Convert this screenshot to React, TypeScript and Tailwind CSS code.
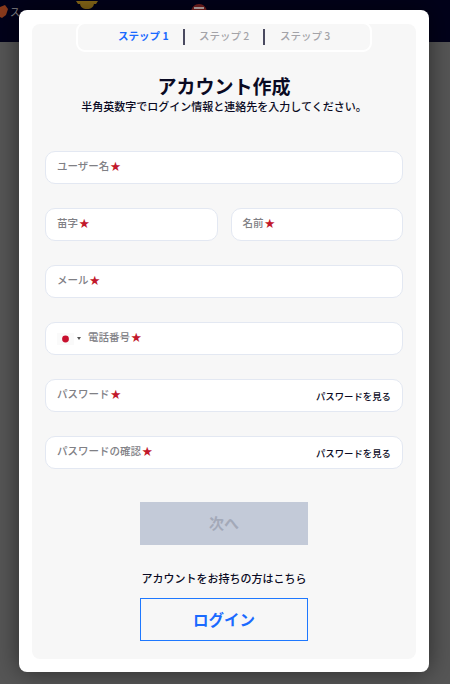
import React from "react";

const FONT = "[font-family:'Noto_Sans_CJK_JP','Noto_Sans',sans-serif]";

function Star() {
  return <span className="ml-[1px] -translate-y-[1px] text-[10.5px] font-bold leading-none text-[#c2182b]">★</span>;
}

function Field({ label, className = "", right }: { label: string; className?: string; right?: boolean }) {
  return (
    <div className={`flex h-[33px] items-center rounded-[10px] border border-[#e3e8f2] bg-white pl-[11px] pr-[11px] ${className}`}>
      <span className="-translate-y-[1px] text-[10.5px] font-medium leading-none text-[#808085]">{label}</span>
      <Star />
      {right && <span className="ml-auto pt-[1px] text-[9.4px] font-medium text-[#0a0a23]">パスワードを見る</span>}
    </div>
  );
}

function Step({ label, active, className }: { label: string; active?: boolean; className: string }) {
  return (
    <span className={`w-[50px] shrink-0 -translate-y-[1px] whitespace-nowrap text-center ${active ? "text-[#1a6aff]" : "font-medium text-[#a3a3a8]"} ${className}`}>
      {label}
    </span>
  );
}

export default function App() {
  return (
    <div className={`relative h-[684px] w-[450px] overflow-hidden bg-[#565656] ${FONT}`}>
      <div className="flex h-[42px] items-start bg-[#02021a]">
        <svg width="8" height="13" viewBox="0 0 8 13" className="mt-[5px] shrink-0">
          <path d="M0 2l5-2 3 4-2 6-4 3-2-1z" fill="#8a3a1c" />
        </svg>
        <span className="ml-[2px] mt-[5px] text-[10px] leading-[14px] text-[#8a8a8a]">ス</span>
        <svg width="24" height="10" viewBox="0 0 24 10" className="ml-[55px] shrink-0">
          <path d="M5 1h14v2c0 4-3 6-7 6s-7-2-7-6zM1 1h4v3H3zM19 1h4l-2 3h-2z" fill="#8a6a18" />
        </svg>
        <svg width="16" height="9" viewBox="0 0 16 9" className="ml-[92px] mt-[4px] shrink-0">
          <path d="M8 0c4 0 8 3 8 9H0c0-6 4-9 8-9z" fill="#7a2020" />
          <rect x="3" y="3" width="10" height="2" fill="#c9b8b8" />
        </svg>
      </div>

      <div className="absolute left-[19px] top-[10px] h-[662px] w-[410px] rounded-[8px] bg-white px-[13px] pb-[13px] pt-[14px] shadow-[0_0_24px_rgba(0,0,0,0.5)]">
        <div className="flex h-full flex-col rounded-[8px] bg-[#f7f7f7] px-[13px]">
          <div className="-mt-[2px] mx-auto flex h-[30px] w-[296px] shrink-0 items-center rounded-[9px] border-2 border-white bg-[#f7f7f7] text-[10.5px] font-bold">
            <Step label="ステップ 1" active className="ml-[40px]" />
            <span className="ml-[15px] h-[16px] w-[2px] bg-[#4a4a60]" />
            <Step label="ステップ 2" className="ml-[14px]" />
            <span className="ml-[14px] h-[16px] w-[2px] bg-[#4a4a60]" />
            <Step label="ステップ 3" className="ml-[15px]" />
          </div>

          <h1 className="mt-[22px] text-center text-[19px] font-bold leading-[24px] text-[#0a0a23]">アカウント作成</h1>
          <p className="text-center text-[11px] font-medium leading-[16px] text-[#0a0a23]">半角英数字でログイン情報と連絡先を入力してください。</p>

          <div className="mt-[37px] flex flex-col gap-[24px]">
            <Field label="ユーザー名" />
            <div className="flex gap-[13px]">
              <Field label="苗字" className="flex-1" />
              <Field label="名前" className="flex-1" />
            </div>
            <Field label="メール" />
            <div className="flex h-[33px] items-center rounded-[10px] border border-[#e3e8f2] bg-white pl-[11px] pr-[11px]">
              <svg width="17" height="12" viewBox="0 0 17 12" className="shrink-0">
                <rect width="17" height="12" fill="#fafafa" />
                <circle cx="8.5" cy="6" r="3.4" fill="#c8102e" />
              </svg>
              <span className="ml-[3px] h-0 w-0 border-x-[2px] border-t-[3px] border-x-transparent border-t-[#555]" />
              <span className="ml-[7px] -translate-y-[1px] text-[10.5px] font-medium leading-none text-[#808085]">電話番号</span>
              <Star />
            </div>
            <Field label="パスワード" right />
            <Field label="パスワードの確認" right />
          </div>

          <div className="mx-auto mt-[33px] flex h-[43px] w-[168px] items-center justify-center bg-[#c3cad8] text-[15px] font-bold text-[#a3a9b8]">次へ</div>
          <p className="mt-[25px] text-center text-[11px] font-medium leading-[16px] text-[#0a0a23]">アカウントをお持ちの方はこちら</p>
          <div className="mx-auto mt-[12px] flex h-[43px] w-[168px] items-center justify-center border border-[#1e78ff] text-[15.5px] font-bold text-[#1a6aff]">ログイン</div>
        </div>
      </div>
    </div>
  );
}
